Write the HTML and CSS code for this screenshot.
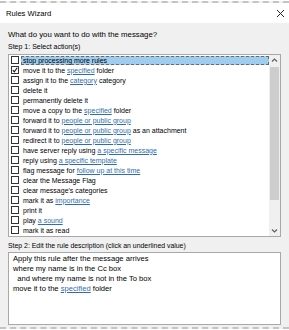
FILE: index.html
```html
<!DOCTYPE html>
<html lang="en">
<head>
  <meta charset="UTF-8" />
  <title>Rules Wizard</title>
  <link rel="stylesheet" href="styles.css">
</head>
<body>

  <div class="dialog">
    <!-- title bar -->
    <div class="titlebar">
      <span class="title">Rules Wizard</span>
      <svg class="close" width="9" height="9" viewBox="0 0 9 9">
        <path d="M1 1 L8 8 M8 1 L1 8" stroke="#222" stroke-width="1" fill="none"/>
      </svg>
    </div>

    <div class="content">
      <p class="label question">What do you want to do with the message?</p>
      <p class="label">Step 1: Select action(s)</p>

      <div class="listbox">
        <ul class="actions">
          <li class="selected"><span class="check"></span><span class="text">stop processing more rules</span></li>
          <li><span class="check"><svg width="8" height="8" viewBox="0 0 8 8"><path d="M1 4 L3 6.5 L7 1" stroke="#111" stroke-width="1.4" fill="none"/></svg></span><span class="text">move it to the <a>specified</a> folder</span></li>
          <li><span class="check"></span><span class="text">assign it to the <a>category</a> category</span></li>
          <li><span class="check"></span><span class="text">delete it</span></li>
          <li><span class="check"></span><span class="text">permanently delete it</span></li>
          <li><span class="check"></span><span class="text">move a copy to the <a>specified</a> folder</span></li>
          <li><span class="check"></span><span class="text">forward it to <a>people or public group</a></span></li>
          <li><span class="check"></span><span class="text">forward it to <a>people or public group</a> as an attachment</span></li>
          <li><span class="check"></span><span class="text">redirect it to <a>people or public group</a></span></li>
          <li><span class="check"></span><span class="text">have server reply using <a>a specific message</a></span></li>
          <li><span class="check"></span><span class="text">reply using <a>a specific template</a></span></li>
          <li><span class="check"></span><span class="text">flag message for <a>follow up at this time</a></span></li>
          <li><span class="check"></span><span class="text">clear the Message Flag</span></li>
          <li><span class="check"></span><span class="text">clear message's categories</span></li>
          <li><span class="check"></span><span class="text">mark it as <a>importance</a></span></li>
          <li><span class="check"></span><span class="text">print it</span></li>
          <li><span class="check"></span><span class="text">play <a>a sound</a></span></li>
          <li><span class="check"></span><span class="text">mark it as read</span></li>
        </ul>
        <div class="scrollbar">
          <svg class="arrow" width="11" height="11" viewBox="0 0 11 11"><path d="M3 6.5 L5.5 4 L8 6.5" stroke="#606060" stroke-width="1.2" fill="none"/></svg>
          <div class="track"><div class="thumb"></div></div>
          <svg class="arrow" width="11" height="11" viewBox="0 0 11 11"><path d="M3 4.5 L5.5 7 L8 4.5" stroke="#606060" stroke-width="1.2" fill="none"/></svg>
        </div>
      </div>

      <p class="label step2">Step 2: Edit the rule description (click an underlined value)</p>

      <div class="description">
        <p>Apply this rule after the message arrives</p>
        <p>where my name is in the Cc box</p>
        <p>&nbsp;&nbsp;and where my name is not in the To box</p>
        <p>move it to the <a>specified</a> folder</p>
      </div>
    </div>
  </div>

</body>
</html>
```

FILE: styles.css
```css
* {
  box-sizing: border-box;
}

body {
  margin: 0;
  width: 289px;
  height: 330px;
  background: #fff;
  font-family: 'Liberation Sans', Arial, sans-serif;
  font-size: 7px;
  color: #000;
  overflow: hidden;
}

.dialog {
  margin-top: 1px;
  height: 328px;
  border-top: 2px dashed #c4c4c4;
  border-bottom: 2px dashed #c4c4c4;
  background: #f0f0f0;
  display: flex;
  flex-direction: column;
}

.titlebar {
  height: 20px;
  background: #fff;
  display: flex;
  align-items: center;
  justify-content: space-between;
  padding: 0 4px 0 6px;
  font-size: 7.6px;
}

.close {
  display: block;
}

.content {
  padding: 6px 8px 0 8px;
}

.label {
  margin: 0;
  height: 12px;
  line-height: 12px;
}

.question {
  font-size: 7.8px;
}

.listbox {
  margin-top: 1px;
  height: 183px;
  background: #fff;
  border: 1px solid #a8a8a8;
  display: flex;
}

.actions {
  list-style: none;
  margin: 0;
  padding: 0;
  flex: 1;
}

.actions li {
  height: 10px;
  display: flex;
  align-items: center;
  white-space: nowrap;
}

.check {
  width: 8px;
  height: 8px;
  margin: 0 2px 0 2px;
  border: 1px solid #333;
  background: #fff;
  display: flex;
  align-items: center;
  justify-content: center;
  flex-shrink: 0;
}

.check svg {
  display: block;
}

.text {
  padding-left: 2px;
  line-height: 9px;
}

.selected .text {
  flex: 1;
  background: #9fcdf0;
  outline: 1px dashed #6a6a6a;
  outline-offset: -1px;
  height: 9px;
}

a {
  color: #2f6db3;
  text-decoration: underline;
}

.scrollbar {
  width: 11px;
  background: #f0f0f0;
  display: flex;
  flex-direction: column;
}

.arrow {
  display: block;
  flex-shrink: 0;
}

.track {
  flex: 1;
  padding: 1px 1px;
}

.thumb {
  height: 133px;
  background: #cdcdcd;
}

.step2 {
  margin-top: 3px;
  font-size: 6.9px;
}

.description {
  height: 73px;
  background: #fff;
  border: 1px solid #a8a8a8;
  padding: 1px 4px;
  font-size: 7.6px;
}

.description p {
  margin: 0;
  height: 10px;
  line-height: 10px;
  white-space: pre;
}
```
